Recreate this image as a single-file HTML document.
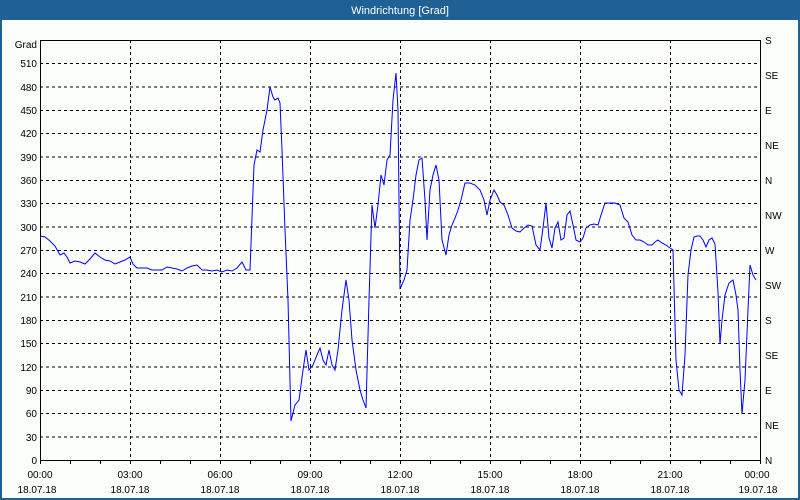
<!DOCTYPE html>
<html><head><meta charset="utf-8"><style>
html,body{margin:0;padding:0;width:800px;height:500px;overflow:hidden;background:#fbfdfb}
svg{display:block}
text{font-family:"Liberation Sans",sans-serif;font-size:10px;fill:#000}
</style></head><body>
<svg width="800" height="500" viewBox="0 0 800 500">
<rect x="0" y="0" width="800" height="500" fill="#fbfdfb"/>
<rect x="1" y="1" width="798" height="498" fill="none" stroke="#1f6194" stroke-width="2"/>
<rect x="0" y="0" width="800" height="20" fill="#1f6194"/>
<text x="400" y="14" text-anchor="middle" style="fill:#fff;font-size:11px">Windrichtung [Grad]</text>
<g stroke="#000" stroke-width="1" stroke-dasharray="3,3" shape-rendering="crispEdges">
<line x1="40" y1="63.5" x2="760" y2="63.5"/><line x1="40" y1="87" x2="760" y2="87"/><line x1="40" y1="110.3" x2="760" y2="110.3"/><line x1="40" y1="133.7" x2="760" y2="133.7"/><line x1="40" y1="157" x2="760" y2="157"/><line x1="40" y1="180.3" x2="760" y2="180.3"/><line x1="40" y1="203.7" x2="760" y2="203.7"/><line x1="40" y1="227" x2="760" y2="227"/><line x1="40" y1="250.3" x2="760" y2="250.3"/><line x1="40" y1="273.7" x2="760" y2="273.7"/><line x1="40" y1="297" x2="760" y2="297"/><line x1="40" y1="320.3" x2="760" y2="320.3"/><line x1="40" y1="343.7" x2="760" y2="343.7"/><line x1="40" y1="367" x2="760" y2="367"/><line x1="40" y1="390.3" x2="760" y2="390.3"/><line x1="40" y1="413.7" x2="760" y2="413.7"/><line x1="40" y1="437" x2="760" y2="437"/>
<line x1="130.5" y1="40" x2="130.5" y2="460"/><line x1="220.5" y1="40" x2="220.5" y2="460"/><line x1="310.5" y1="40" x2="310.5" y2="460"/><line x1="400.5" y1="40" x2="400.5" y2="460"/><line x1="490.5" y1="40" x2="490.5" y2="460"/><line x1="580.5" y1="40" x2="580.5" y2="460"/><line x1="670.5" y1="40" x2="670.5" y2="460"/>
</g>
<g stroke="#000" stroke-width="1" shape-rendering="crispEdges">
<line x1="40" y1="40.5" x2="760" y2="40.5"/><line x1="40.5" y1="40" x2="40.5" y2="464"/><line x1="760.5" y1="40" x2="760.5" y2="464"/><line x1="40" y1="460.5" x2="760" y2="460.5"/>
<path d="M70.5 460v4M100.5 460v4M130.5 460v4M160.5 460v4M190.5 460v4M220.5 460v4M250.5 460v4M280.5 460v4M310.5 460v4M340.5 460v4M370.5 460v4M400.5 460v4M430.5 460v4M460.5 460v4M490.5 460v4M520.5 460v4M550.5 460v4M580.5 460v4M610.5 460v4M640.5 460v4M670.5 460v4M700.5 460v4M730.5 460v4"/>
</g>
<polyline fill="none" stroke="#0000ff" stroke-width="1" points="40,236 45,237 50,241 55,246 60,255 64,253 67,257 70,263 75,261 80,262 85,264 90,259 95,253 100,257 105,260 110,261 115,264 120,262 125,260 130,257 133,264 137,268 142,268 147,268 152,270 157,270 162,270 167,267 172,268 177,269 182,271 187,268 192,266 197,265 202,270 207,270 212,271 217,270 222,272 227,270 232,271 237,268 242,262 246,270 250,270 254,165 257,150 260,152 263,130 267,110 270,87 273,97 275,100 278,98 280,103 282,150 285,230 288,300 291,421 295,405 299,400 303,370 306,350 309,370 313,365 317,355 320,348 323,360 326,365 329,350 332,365 335,370 338,350 342,310 346,280 349,300 352,340 356,370 360,390 363,400 366,408 369,300 372,205 375,228 378,205 381,175 384,185 387,160 390,155 393,100 396,73 398,110 400,289 404,280 407,270 410,220 413,200 416,175 419,160 422,158 425,200 427,240 430,190 433,175 436,165 439,180 442,240 446,255 449,235 452,225 455,218 458,210 461,200 465,183 470,183 475,185 480,190 484,200 487,215 490,200 494,190 497,195 500,202 504,205 508,215 512,228 516,231 520,232 524,228 528,225 532,226 536,245 540,250 543,228 546,203 549,238 552,248 555,228 558,222 561,240 564,238 567,215 570,211 573,225 576,240 580,242 583,238 586,228 590,225 594,224 598,225 601,215 605,203 610,203 615,203 620,205 624,218 628,222 632,235 636,240 640,240 644,242 648,245 652,245 655,242 658,240 662,243 666,245 670,248 673,250 676,360 679,390 682,395 685,355 688,275 691,250 694,237 697,236 700,236 703,240 706,247 709,240 712,238 715,244 718,292 720,344 722,320 725,295 729,283 733,280 736,295 738,310 740,370 742,414 745,380 748,310 750,265 753,275 756,280"/>
<g text-anchor="end">
<text x="37" y="48">Grad</text>
<text x="37" y="67">510</text><text x="37" y="91">480</text><text x="37" y="114">450</text><text x="37" y="137">420</text><text x="37" y="161">390</text><text x="37" y="184">360</text><text x="37" y="207">330</text><text x="37" y="231">300</text><text x="37" y="254">270</text><text x="37" y="277">240</text><text x="37" y="301">210</text><text x="37" y="324">180</text><text x="37" y="347">150</text><text x="37" y="371">120</text><text x="37" y="394">90</text><text x="37" y="417">60</text><text x="37" y="441">30</text><text x="37" y="464">0</text>
</g>
<g>
<text x="765" y="44">S</text><text x="765" y="79">SE</text><text x="765" y="114">E</text><text x="765" y="149">NE</text><text x="765" y="184">N</text><text x="765" y="219">NW</text><text x="765" y="254">W</text><text x="765" y="289">SW</text><text x="765" y="324">S</text><text x="765" y="359">SE</text><text x="765" y="394">E</text><text x="765" y="429">NE</text><text x="765" y="464">N</text>
</g>
<g text-anchor="middle">
<text x="40" y="478">00:00</text><text x="130" y="478">03:00</text><text x="220" y="478">06:00</text><text x="310" y="478">09:00</text><text x="400" y="478">12:00</text><text x="490" y="478">15:00</text><text x="580" y="478">18:00</text><text x="670" y="478">21:00</text><text x="757" y="478">00:00</text>
<text x="37" y="493">18.07.18</text><text x="130" y="493">18.07.18</text><text x="220" y="493">18.07.18</text><text x="310" y="493">18.07.18</text><text x="400" y="493">18.07.18</text><text x="490" y="493">18.07.18</text><text x="580" y="493">18.07.18</text><text x="670" y="493">18.07.18</text><text x="758" y="493">19.07.18</text>
</g>
</svg>
</body></html>
